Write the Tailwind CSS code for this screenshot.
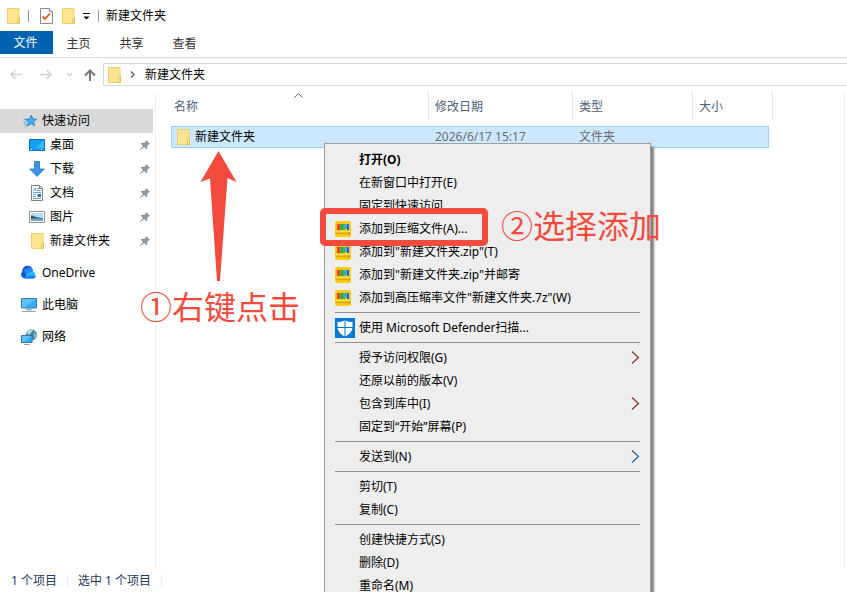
<!DOCTYPE html>
<html lang="zh-CN">
<head>
    <meta charset="UTF-8">
    <meta name="viewport" content="width=device-width, initial-scale=1.0">
    <title>新建文件夹</title>
    <script src="https://cdn.jsdelivr.net/npm/@tailwindcss/browser@4"></script>
</head>
<body class="relative h-screen flex flex-col overflow-hidden bg-white text-black text-[12px] leading-[16px] font-['Noto_Sans','Noto_Sans_CJK_SC',sans-serif]">

    <!-- Shared icons -->
    <svg class="hidden">
        <symbol id="folder" viewBox="0 0 14 16">
            <path d="M.5.5h11.500v15H.5z" fill="#ffe591" stroke="#efd068"/>
            <path d="M10.500 15.500v-4l1-1.500h1v5.500z" fill="#ffe591" stroke="#e6c14c"/>
        </symbol>
        <symbol id="pin" viewBox="0 0 10 10">
            <path d="M6 0l4 4-1.200.3-1.600 1.700.2 2.300-1 .9-2.300-2.300L.6 10 0 9.500l3-3.600L.8 3.700l1-1 2.300.2L5.700 1.200z" fill="#8a98a5"/>
        </symbol>
        <symbol id="archive" viewBox="0 0 16 16">
            <rect width="16" height="16" rx="2.500" fill="#ffc90e"/>
            <path d="M2 3h3.500v6H2z" fill="#f0402c"/>
            <path d="M5.500 3H8v6H5.500z" fill="#1fae4b"/>
            <path d="M8 3h2v6H8z" fill="#35c160"/>
            <path d="M10 3h2v5h-2z" fill="#4a9cf5"/>
            <path d="M12 3h2v6h-2z" fill="#2565dd"/>
            <path d="M1 10.500h14" stroke="#ffe067"/>
            <path d="M1 13.200l1.500-1.500L4 13.200l1.500-1.500L7 13.200l1.500-1.500 1.500 1.500 1.500-1.500 1 1.500h2v-1.500H13" fill="none" stroke="#b58a10" stroke-width=".8"/>
        </symbol>
        <symbol id="submenu" viewBox="0 0 9 14">
            <path d="M1 .5l6.500 6L1 12.500" fill="none" stroke="currentColor" stroke-width="1.200"/>
        </symbol>
    </svg>

    <!-- Title bar -->
    <header class="flex items-center h-[31px] shrink-0 pl-[7px]">
        <svg class="w-[14px] h-4"><use href="#folder"/></svg>
        <span class="w-px h-3 ml-[7px] bg-[#9a9a9a]"></span>
        <button class="ml-[11px]" aria-label="属性">
            <svg class="block w-[13px] h-4" viewBox="0 0 13 16">
                <path d="M.5.5h9l3 3v12H.5z" fill="#fafafa" stroke="#8b8b8b"/>
                <path d="M9.500.5v3h3" fill="#fff" stroke="#8b8b8b"/>
                <path d="M2.500 8.500L5 11l5-5.500" fill="none" stroke="#e8541c" stroke-width="1.800"/>
            </svg>
        </button>
        <button class="ml-[9px]" aria-label="新建文件夹">
            <svg class="block w-[14px] h-4"><use href="#folder"/></svg>
        </button>
        <button class="ml-[6px]" aria-label="自定义快速访问工具栏">
            <svg class="block w-[9px] h-2" viewBox="0 0 9 8">
                <path d="M1 1.500h7" stroke="#000"/>
                <path d="M1.500 4.500h6l-3 3z"/>
            </svg>
        </button>
        <span class="w-px h-3 ml-[7px] bg-[#9a9a9a]"></span>
        <h1 class="ml-[7px]">新建文件夹</h1>
    </header>

    <!-- Ribbon tabs -->
    <nav class="flex h-[27px] shrink-0 border-b border-[#dadbdc] text-[#333]">
        <button class="w-[53px] h-[23px] pr-[2px] bg-[#0063b1] text-white">文件</button>
        <button class="w-[53px] h-[25px] pr-[2px]">主页</button>
        <button class="w-[53px] h-[25px] pr-[2px]">共享</button>
        <button class="w-[53px] h-[25px] pr-[2px]">查看</button>
    </nav>

    <!-- Address row -->
    <div class="flex items-center shrink-0 h-[35px] pl-[10px] pb-[2px]">
        <button aria-label="后退"><svg class="block w-3 h-[11px]" viewBox="0 0 12 11" fill="none" stroke="#d2d2d2" stroke-width="1.500"><path d="M12 5.500H1M5.500 1L1 5.500 5.500 10"/></svg></button>
        <button class="ml-[18px]" aria-label="前进"><svg class="block w-3 h-[11px]" viewBox="0 0 12 11" fill="none" stroke="#d2d2d2" stroke-width="1.500"><path d="M0 5.500h11M6.500 1L11 5.500 6.500 10"/></svg></button>
        <button class="ml-[14px]" aria-label="最近浏览的位置"><svg class="block w-[7px] h-[5px]" viewBox="0 0 7 5" fill="none" stroke="#cfcfcf" stroke-width="1.500"><path d="M1 1l2.500 2.500L6 1"/></svg></button>
        <button class="ml-[11px]" aria-label="上移"><svg class="block w-3 h-3" viewBox="0 0 12 12" fill="none" stroke="#777" stroke-width="2"><path d="M6 12V1.500M1 6.500l5-5 5 5"/></svg></button>
        <div class="flex items-center flex-1 h-[23px] ml-[7px] pl-1 border border-r-0 border-[#d9d9d9]">
            <svg class="w-[14px] h-4"><use href="#folder"/></svg>
            <svg class="w-[5px] h-[7px] ml-2" viewBox="0 0 5 7" fill="none" stroke="#666" stroke-width="1.500"><path d="M1 .5l3 3-3 3"/></svg>
            <a href="#" class="ml-[10px]">新建文件夹</a>
        </div>
    </div>

    <div class="flex flex-1 min-h-0">
        <!-- Navigation pane -->
        <aside class="w-[156px] shrink-0 pt-4 pr-[2px] border-r border-[#f0f0f0]">
            <a href="#" class="flex items-center h-6 pl-[22px] gap-1 bg-[#d9d9d9]">
                <svg class="w-4 h-4" viewBox="0 0 16 16">
                    <path d="M9.500 2l1.200 4 4 .2-3.200 2.600 1 4-3.300-2.200-3.700 2.200 1.200-3.800L3.500 6.200l4.200-.2z" fill="#3fb0f2" stroke="#1a78bd" stroke-width=".8"/>
                    <path d="M1.500 6.500h3M1 9h3.500M2 11.500h3M3 13.500h2" stroke="#3f9fdb" stroke-width=".8"/>
                </svg>
                快速访问
            </a>
            <a href="#" class="flex items-center h-6 pl-[29px] pr-[3px] gap-[5px]">
                <svg class="w-4 h-4" viewBox="0 0 16 16">
                    <path d="M.5 2.500h15v11H.5z" fill="#14a0fb" stroke="#0a6fbd"/>
                    <path d="M15 3v8L7 11z" fill="#43b5ff"/>
                    <path d="M2 12.500h2M12 12.500h2" stroke="#d9f0ff" stroke-dasharray="1 1"/>
                </svg>
                <span class="flex-1">桌面</span>
                <svg class="w-[10px] h-[10px]"><use href="#pin"/></svg>
            </a>
            <a href="#" class="flex items-center h-6 pl-[29px] pr-[3px] gap-[5px]">
                <svg class="w-4 h-4" viewBox="0 0 16 16"><path d="M5.500.5h5V8h4.800L8 15.500.700 8h4.800z" fill="#3b94e4" stroke="#2a78c4" stroke-width=".8"/></svg>
                <span class="flex-1">下载</span>
                <svg class="w-[10px] h-[10px]"><use href="#pin"/></svg>
            </a>
            <a href="#" class="flex items-center h-6 pl-[29px] pr-[3px] gap-[5px]">
                <svg class="w-4 h-4" viewBox="0 0 16 16">
                    <path d="M2.500.5h8l3 3v12h-11z" fill="#fff" stroke="#808080"/>
                    <path d="M10.500.5v3h3" fill="none" stroke="#808080"/>
                    <path d="M4.500 6L6 3l1 3M8 3.500h2M8 5.500h4M4 7.500h8M4 9.500h3M4 11.500h3M4 13.500h8" fill="none" stroke="#4d9bd6" stroke-width=".9"/>
                    <path d="M8.500 9h3.500v3H8.500z" fill="#3d6f97"/>
                </svg>
                <span class="flex-1">文档</span>
                <svg class="w-[10px] h-[10px]"><use href="#pin"/></svg>
            </a>
            <a href="#" class="flex items-center h-6 pl-[29px] pr-[3px] gap-[5px]">
                <svg class="w-4 h-4" viewBox="0 0 16 16">
                    <path d="M.5 2.500h15v11H.5z" fill="#fff" stroke="#909090"/>
                    <path d="M2 4h12v8H2z" fill="#b5dcf5"/>
                    <path d="M2 6.500c3 0 5 2.500 12 2.500v2H2z" fill="#34586b"/>
                    <path d="M2 10c4-1 8 0 12-.5V12H2z" fill="#6fa9c4"/>
                </svg>
                <span class="flex-1">图片</span>
                <svg class="w-[10px] h-[10px]"><use href="#pin"/></svg>
            </a>
            <a href="#" class="flex items-center h-6 pl-[31px] pr-[3px] gap-[5px]">
                <svg class="w-[14px] h-4"><use href="#folder"/></svg>
                <span class="flex-1">新建文件夹</span>
                <svg class="w-[10px] h-[10px]"><use href="#pin"/></svg>
            </a>
            <a href="#" class="flex items-center h-6 mt-2 pl-[21px] gap-[5px]">
                <svg class="w-4 h-4" viewBox="0 0 16 16">
                    <path d="M4 13.500a4 4 0 01-2.800-6.800A5 5 0 0112 5.700L8 13.500z" fill="#1557c6"/>
                    <path d="M3 5.800a5 5 0 019.300.4C9 6.500 7 9 5.500 10.500z" fill="#2489f2"/>
                    <path d="M4 13.500C5 10 8 6.500 11.500 6.200a3.900 3.900 0 01.8 7.300z" fill="#25b9fc"/>
                    <path d="M4 13.500c2-2 4-3.200 6.500-2.800l4.500.8a3.400 3.400 0 01-2.700 2z" fill="#1a80ee"/>
                </svg>
                OneDrive
            </a>
            <a href="#" class="flex items-center h-6 mt-2 pl-[21px] gap-[5px]">
                <svg class="w-4 h-4" viewBox="0 0 16 16">
                    <path d="M.5 1.500h15v9.500H.5z" fill="#35aefa" stroke="#3a7ca5"/>
                    <path d="M1 2h14L3 10.500H1z" fill="#5fc1fd"/>
                    <path d="M8 11.500v2" stroke="#8fa5b3" stroke-width="2"/>
                    <path d="M5 12.500h6M1 14.500h14" stroke="#8fa5b3"/>
                </svg>
                此电脑
            </a>
            <a href="#" class="flex items-center h-6 mt-2 pl-[21px] gap-[5px]">
                <svg class="w-4 h-4" viewBox="0 0 16 16">
                    <circle cx="10.500" cy="5.800" r="5.500" fill="#4c86a3"/>
                    <path d="M6 3c2-3 5-3 6-2l-2 3-3 2z" fill="#b9dbe6"/>
                    <path d="M13 4l2.500 1v3L13 9z" fill="#8dbccd"/>
                    <path d="M.5 6.500H11v7H.5z" fill="#35aefa" stroke="#35749c"/>
                    <path d="M1 7h9.500L3 13H1z" fill="#5fc1fd"/>
                    <path d="M3 15.500h6" stroke="#8fa5b3"/>
                </svg>
                网络
            </a>
        </aside>

        <!-- File list -->
        <main class="flex-1 mr-[2px] pl-[15px] border-r border-[#f0f0f0]">
            <table class="table-fixed w-[602px] border-separate border-spacing-0 text-left">
                <thead>
                    <tr class="h-[27px] text-[#4c607a]">
                        <th class="relative w-[258px] p-0 pl-[3px] font-normal border-r border-[#e2e2e2]">
                            名称
                            <svg class="absolute left-[123px] top-0 w-[9px] h-[5px]" viewBox="0 0 9 5" fill="none" stroke="#666"><path d="M.5 4.500l4-4 4 4"/></svg>
                        </th>
                        <th class="w-[144px] p-0 pl-[6px] font-normal border-r border-[#e2e2e2]">修改日期</th>
                        <th class="w-[120px] p-0 pl-[6px] font-normal border-r border-[#e2e2e2]">类型</th>
                        <th class="w-[80px] p-0 pl-[6px] font-normal border-r border-[#e2e2e2]">大小</th>
                    </tr>
                </thead>
                <tbody>
                    <tr class="text-[#6d6d6d]">
                        <td class="p-0 pt-[6px]">
                            <div class="flex items-center gap-1 h-[22px] pl-[5px] border border-r-0 border-[#99d1ff] bg-[#cce8ff] text-black">
                                <svg class="w-[14px] h-4"><use href="#folder"/></svg>
                                新建文件夹
                            </div>
                        </td>
                        <td class="p-0 pt-[6px]"><div class="flex items-center h-[22px] pl-[6px] border-y border-[#99d1ff] bg-[#cce8ff]">2026/6/17 15:17</div></td>
                        <td class="p-0 pt-[6px]"><div class="flex items-center h-[22px] pl-[6px] border-y border-[#99d1ff] bg-[#cce8ff]">文件夹</div></td>
                        <td class="p-0 pt-[6px] pr-1"><div class="h-[22px] border border-l-0 border-[#99d1ff] bg-[#cce8ff]"></div></td>
                    </tr>
                </tbody>
            </table>
        </main>
    </div>

    <!-- Status bar -->
    <footer class="flex items-center h-[23px] shrink-0 pl-[11px] text-[#1e395b]">
        <span>1 个项目</span>
        <span class="w-px h-3 mx-[10px] bg-[#ececec]"></span>
        <span>选中 1 个项目</span>
        <span class="w-px h-3 mx-[10px] bg-[#ececec]"></span>
    </footer>

    <!-- Context menu -->
    <div role="menu" class="absolute left-[324px] top-[143px] w-[327px] py-1 border border-[#a0a0a0] bg-[#eee] shadow-[3px_4px_2px_rgba(0,0,0,0.5)]">
        <button role="menuitem" class="flex items-center w-full h-[23px] pl-[34px] font-bold">打开(O)</button>
        <button role="menuitem" class="flex items-center w-full h-[23px] pl-[34px]">在新窗口中打开(E)</button>
        <button role="menuitem" class="flex items-center w-full h-[23px] pl-[34px]">固定到快速访问</button>
        <button role="menuitem" class="flex items-center w-full h-[23px] pl-[10px] gap-2"><svg class="w-4 h-4"><use href="#archive"/></svg>添加到压缩文件(A)...</button>
        <button role="menuitem" class="flex items-center w-full h-[23px] pl-[10px] gap-2"><svg class="w-4 h-4"><use href="#archive"/></svg>添加到"新建文件夹.zip"(T)</button>
        <button role="menuitem" class="flex items-center w-full h-[23px] pl-[10px] gap-2"><svg class="w-4 h-4"><use href="#archive"/></svg>添加到"新建文件夹.zip"并邮寄</button>
        <button role="menuitem" class="flex items-center w-full h-[23px] pl-[10px] gap-2"><svg class="w-4 h-4"><use href="#archive"/></svg>添加到高压缩率文件"新建文件夹.7z"(W)</button>
        <hr class="my-[3px] mx-[10px] border-[#919191]">
        <button role="menuitem" class="flex items-center w-full h-[23px] pl-[10px] gap-1">
            <svg class="w-5 h-5" viewBox="0 0 20 20">
                <path d="M0 0h20v20H0z" fill="#0078d7"/>
                <path d="M10 2c2 1.500 4.500 2 7.500 2v5c0 4-3 7.500-7.500 9.500C5.500 16.500 2.500 13 2.500 9V4C5.500 4 8 3.500 10 2z" fill="#fff"/>
                <path d="M10 1v18M2 9.500h16" stroke="#0078d7"/>
            </svg>
            使用 Microsoft Defender扫描...
        </button>
        <hr class="my-[3px] mx-[10px] border-[#919191]">
        <button role="menuitem" class="flex items-center justify-between w-full h-[23px] pl-[34px] pr-[10px]">授予访问权限(G)<svg class="w-[9px] h-[14px] text-[#8c2a2a]"><use href="#submenu"/></svg></button>
        <button role="menuitem" class="flex items-center w-full h-[23px] pl-[34px]">还原以前的版本(V)</button>
        <button role="menuitem" class="flex items-center justify-between w-full h-[23px] pl-[34px] pr-[10px]">包含到库中(I)<svg class="w-[9px] h-[14px] text-[#8c2a2a]"><use href="#submenu"/></svg></button>
        <button role="menuitem" class="flex items-center w-full h-[23px] pl-[34px]">固定到“开始”屏幕(P)</button>
        <hr class="my-[3px] mx-[10px] border-[#919191]">
        <button role="menuitem" class="flex items-center justify-between w-full h-[23px] pl-[34px] pr-[10px]">发送到(N)<svg class="w-[9px] h-[14px] text-[#1c5f9e]"><use href="#submenu"/></svg></button>
        <hr class="my-[3px] mx-[10px] border-[#919191]">
        <button role="menuitem" class="flex items-center w-full h-[23px] pl-[34px]">剪切(T)</button>
        <button role="menuitem" class="flex items-center w-full h-[23px] pl-[34px]">复制(C)</button>
        <hr class="my-[3px] mx-[10px] border-[#919191]">
        <button role="menuitem" class="flex items-center w-full h-[23px] pl-[34px]">创建快捷方式(S)</button>
        <button role="menuitem" class="flex items-center w-full h-[23px] pl-[34px]">删除(D)</button>
        <button role="menuitem" class="flex items-center w-full h-[23px] pl-[34px]">重命名(M)</button>
    </div>

    <!-- Step annotations -->
    <svg class="absolute left-[200px] top-[150px] w-[37px] h-[132px]" viewBox="0 0 37 132">
        <path d="M18.500 1L36.500 32l-9-4L20 131h-3L10 28.500.5 32z" fill="#f24b3e"/>
    </svg>
    <p class="absolute left-[140px] top-[285px] text-[32px] leading-[40px] whitespace-nowrap text-[#f24b3e] font-['Noto_Sans_CJK_SC',sans-serif]">①右键点击</p>
    <div class="absolute left-[320px] top-[208px] w-[168px] h-[38px] border-6 border-[#f24b3e] rounded-[5px]"></div>
    <p class="absolute left-[501px] top-[204px] text-[32px] leading-[40px] whitespace-nowrap text-[#f24b3e] font-['Noto_Sans_CJK_SC',sans-serif]">②选择添加</p>
</body>
</html>
